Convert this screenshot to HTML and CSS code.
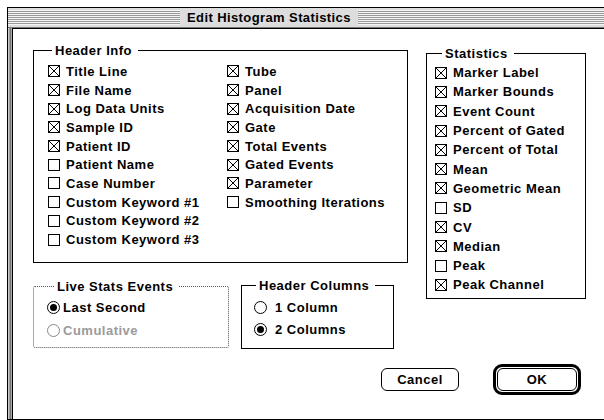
FILE: index.html
```html
<!DOCTYPE html>
<html lang="en">
<head>
    <meta charset="UTF-8">
    <title>Edit Histogram Statistics</title>
    <link rel="stylesheet" href="styles.css">
</head>
<body>
    <div class="window">
        <div class="titlebar">
            <div class="stripes stripes-left"></div>
            <span class="title">Edit Histogram Statistics</span>
            <div class="stripes"></div>
        </div>
        <div class="frame">
            <div class="content">
                <div class="main">
                    <div class="left">
                        <fieldset class="group header-info">
                            <legend>Header Info</legend>
                            <div class="cols">
                                <ul class="list col1">
                                    <li class="item"><span class="cb on"></span>Title Line</li>
                                    <li class="item"><span class="cb on"></span>File Name</li>
                                    <li class="item"><span class="cb on"></span>Log Data Units</li>
                                    <li class="item"><span class="cb on"></span>Sample ID</li>
                                    <li class="item"><span class="cb on"></span>Patient ID</li>
                                    <li class="item"><span class="cb"></span>Patient Name</li>
                                    <li class="item"><span class="cb"></span>Case Number</li>
                                    <li class="item"><span class="cb"></span>Custom Keyword #1</li>
                                    <li class="item"><span class="cb"></span>Custom Keyword #2</li>
                                    <li class="item"><span class="cb"></span>Custom Keyword #3</li>
                                </ul>
                                <ul class="list">
                                    <li class="item"><span class="cb on"></span>Tube</li>
                                    <li class="item"><span class="cb on"></span>Panel</li>
                                    <li class="item"><span class="cb on"></span>Acquisition Date</li>
                                    <li class="item"><span class="cb on"></span>Gate</li>
                                    <li class="item"><span class="cb on"></span>Total Events</li>
                                    <li class="item"><span class="cb on"></span>Gated Events</li>
                                    <li class="item"><span class="cb on"></span>Parameter</li>
                                    <li class="item"><span class="cb"></span>Smoothing Iterations</li>
                                </ul>
                            </div>
                        </fieldset>

                        <div class="lower">
                            <fieldset class="group live">
                                <legend>Live Stats Events</legend>
                                <div class="radio-row"><span class="radio on"></span>Last Second</div>
                                <div class="radio-row disabled"><span class="radio"></span>Cumulative</div>
                            </fieldset>
                            <fieldset class="group columns">
                                <legend>Header Columns</legend>
                                <div class="radio-row"><span class="radio"></span>1 Column</div>
                                <div class="radio-row"><span class="radio on"></span>2 Columns</div>
                            </fieldset>
                        </div>
                    </div>

                    <fieldset class="group stats">
                        <legend>Statistics</legend>
                        <ul class="list">
                            <li class="item"><span class="cb on"></span>Marker Label</li>
                            <li class="item"><span class="cb on"></span>Marker Bounds</li>
                            <li class="item"><span class="cb on"></span>Event Count</li>
                            <li class="item"><span class="cb on"></span>Percent of Gated</li>
                            <li class="item"><span class="cb on"></span>Percent of Total</li>
                            <li class="item"><span class="cb on"></span>Mean</li>
                            <li class="item"><span class="cb on"></span>Geometric Mean</li>
                            <li class="item"><span class="cb"></span>SD</li>
                            <li class="item"><span class="cb on"></span>CV</li>
                            <li class="item"><span class="cb on"></span>Median</li>
                            <li class="item"><span class="cb"></span>Peak</li>
                            <li class="item"><span class="cb on"></span>Peak Channel</li>
                        </ul>
                    </fieldset>
                </div>

                <div class="buttons">
                    <button class="btn">Cancel</button>
                    <div class="default-ring"><button class="btn ok">OK</button></div>
                </div>
            </div>
        </div>
    </div>
</body>
</html>
```

FILE: styles.css
```css
html, body {
    margin: 0;
    height: 100%;
}
body {
    background: #fff;
    color: #000;
    font-family: "Liberation Sans", Arial, sans-serif;
    font-weight: bold;
    font-size: 13px;
    letter-spacing: 0.5px;
    overflow: hidden;
}
.window {
    margin: 7px 0 0 7px;
    width: calc(100% - 7px);
    height: 413px;
    box-sizing: border-box;
    border: 1px solid #000;
    border-right: none;
    display: flex;
    flex-direction: column;
    background: #ccc;
}
/* title bar with platinum stripes */
.titlebar {
    height: 20px;
    box-sizing: border-box;
    padding: 2px 0 2px 0;
    background: #ddd;
    border-bottom: 1px solid #777;
    display: flex;
}
.stripes {
    flex: 1;
    background: repeating-linear-gradient(to bottom, #f4f4f4 0 1px, #999 1px 2px);
}
.stripes-left {
    flex: none;
    width: 172px;
}
.title {
    padding: 0 7px;
    line-height: 15px;
    letter-spacing: 0.4px;
}
.frame {
    flex: 1;
    display: flex;
    padding-left: 4px;
    background: linear-gradient(to right, #ccc 0 1px, #999 1px 2px, #777 2px 3px, #aaa 3px 4px);
}
.content {
    flex: 1;
    background: #fff;
    border-left: 1px solid #000;
    border-top: 1px solid #000;
    padding: 14px 0 0 20px;
}
.main {
    display: flex;
    align-items: flex-start;
    gap: 18px;
}
.left {
    width: 375px;
}
/* group boxes */
.group {
    margin: 0;
    min-width: 0;
    box-sizing: border-box;
    border: 1px solid #000;
}
.group legend {
    line-height: 15px;
    padding: 0 6px 0 3px;
}
.header-info {
    width: 375px;
    padding: 4px 0 13px 14px;
}
.header-info legend {
    margin-left: 4px;
}
.cols {
    display: flex;
}
.col1 {
    width: 179px;
}
.list {
    list-style: none;
    margin: 0;
    padding: 0;
}
.item {
    display: flex;
    align-items: center;
    height: 18.7px;
    white-space: nowrap;
}
.stats .item {
    height: 19.3px;
}
.cb {
    flex: none;
    width: 12px;
    height: 12px;
    box-sizing: border-box;
    border: 1px solid #000;
    margin-right: 6px;
}
.cb.on {
    background:
        linear-gradient(45deg, transparent 46.5%, #000 46.5%, #000 53.5%, transparent 53.5%),
        linear-gradient(-45deg, transparent 46.5%, #000 46.5%, #000 53.5%, transparent 53.5%);
}
.stats {
    width: 160px;
    margin-top: 3px;
    padding: 2px 0 3px 8px;
}
.stats legend {
    margin-left: 7px;
}
.lower {
    display: flex;
    align-items: flex-start;
    margin-top: 15px;
}
.live {
    width: 196px;
    margin-top: 1px;
    padding: 2px 0 5px 13px;
    border: 1px dotted #555;
    border-radius: 2px;
}
.live legend {
    margin-left: 7px;
}
.columns {
    width: 153px;
    margin-left: 12px;
    padding: 4px 0 7px 12px;
}
.columns legend {
    margin-left: 2px;
}
.radio-row {
    display: flex;
    align-items: center;
    height: 23px;
    white-space: nowrap;
}
.columns .radio-row {
    height: 22px;
}
.radio {
    flex: none;
    position: relative;
    width: 13px;
    height: 13px;
    box-sizing: border-box;
    border: 1px solid #000;
    border-radius: 50%;
    margin-right: 3px;
}
.columns .radio {
    margin-right: 8px;
}
.radio.on::after {
    content: "";
    position: absolute;
    inset: 2px;
    background: #000;
    border-radius: 50%;
}
.disabled {
    color: #9a9a9a;
}
.disabled .radio {
    border-color: #888;
}
/* push buttons */
.buttons {
    display: flex;
    align-items: center;
    margin-top: 15px;
    padding-left: 348px;
}
.btn {
    width: 78px;
    height: 23px;
    box-sizing: border-box;
    margin: 0;
    padding: 0;
    border: 1px solid #000;
    border-radius: 6px;
    background: #fff;
    color: #000;
    font: inherit;
    letter-spacing: inherit;
}
.btn.ok {
    width: 80px;
    display: block;
}
.default-ring {
    margin-left: 34px;
    padding: 1px;
    border: 3px solid #000;
    border-radius: 9px;
}
```
